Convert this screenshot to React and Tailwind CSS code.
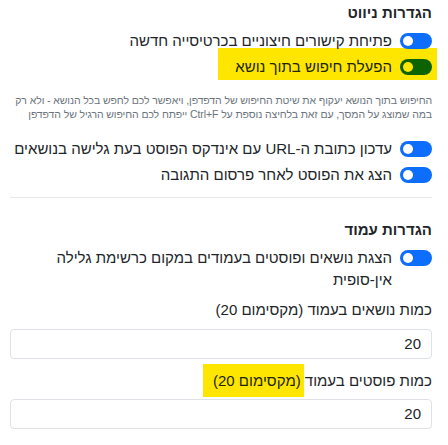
import React from "react";

const Toggle = ({ marked = false }) => (
  <span
    className={`relative block w-[32px] h-[16px] rounded-full ${marked ? "bg-[#0d6300]" : "bg-[#0d6efd]"}`}
  >
    <span
      className={`absolute left-[3px] top-[3px] w-[10px] h-[10px] rounded-full ${marked ? "bg-[#ffe600]" : "bg-white"}`}
    />
  </span>
);

const ToggleRow = ({ children, marked = false }) => (
  <div className="relative flex items-start gap-[8px] mb-[4px]">
    <span className="flex h-[22px] items-center shrink-0">
      <Toggle marked={marked} />
    </span>
    <span className={`text-[15px] leading-[22px] ${marked ? "text-[#212500]" : "text-[#212529]"}`}>{children}</span>
  </div>
);

export default function App() {
  return (
    <div
      dir="rtl"
      className="relative z-0 bg-white min-h-screen flex flex-col pr-[16px] pl-[10px] pt-[2px]"
      style={{ fontFamily: '"Liberation Sans", "DejaVu Sans", sans-serif' }}
    >
      <h3 className="text-[15px] font-bold leading-[22px] text-[#212529] mb-[6px]">הגדרות ניווט</h3>

      <ToggleRow>פתיחת קישורים חיצוניים בכרטיסייה חדשה</ToggleRow>
      <div className="relative">
        {/* tour highlight */}
        <span className="absolute -z-10 right-[-5px] top-[-8px] w-[219px] h-[32px] bg-[#ffe600]" />
        <ToggleRow marked>הפעלת חיפוש בתוך נושא</ToggleRow>
      </div>

      <p className="text-[10.5px] leading-[14px] tracking-[-0.1px] text-[#6c757d] mt-[11px] mb-[17px]">
        החיפוש בתוך הנושא יעקוף את שיטת החיפוש של הדפדפן, ויאפשר לכם לחפש בכל הנושא - ולא רק במה שמוצג על המסך, עם זאת בלחיצה נוספת על Ctrl+F ייפתח לכם החיפוש הרגיל של הדפדפן
      </p>

      <ToggleRow>עדכון כתובת ה-URL עם אינדקס הפוסט בעת גלישה בנושאים</ToggleRow>
      <ToggleRow>הצג את הפוסט לאחר פרסום התגובה</ToggleRow>

      <hr className="border-t border-[#e5e7eb] mt-[7px] mb-[21px]" />

      <h3 className="text-[15px] font-bold leading-[22px] text-[#212529] mb-[6px]">הגדרות עמוד</h3>

      <ToggleRow>הצגת נושאים ופוסטים בעמודים במקום כרשימת גלילה אין-סופית</ToggleRow>

      <label className="block text-[15px] leading-[22px] text-[#212529] mt-[4px] mb-[8px]">
        כמות נושאים בעמוד (מקסימום 20)
      </label>
      <div className="h-[30px] border border-[#dee2e6] rounded-[4px] flex items-center px-[10px] text-[15px] text-[#212529] mb-[11px]">
        20
      </div>

      <label className="block text-[15px] leading-[22px] text-[#212529] mb-[7px]">
        כמות פוסטים בעמוד{" "}
        <span className="relative inline-block">
          <span className="absolute -z-10 left-[-10px] right-[-3px] top-[-6px] h-[33px] bg-[#ffe600]" />
          <span className="text-[#212500]">(מקסימום 20)</span>
        </span>
      </label>
      <div className="h-[30px] border border-[#dee2e6] rounded-[4px] flex items-center px-[10px] text-[15px] text-[#212529]">
        20
      </div>
    </div>
  );
}
